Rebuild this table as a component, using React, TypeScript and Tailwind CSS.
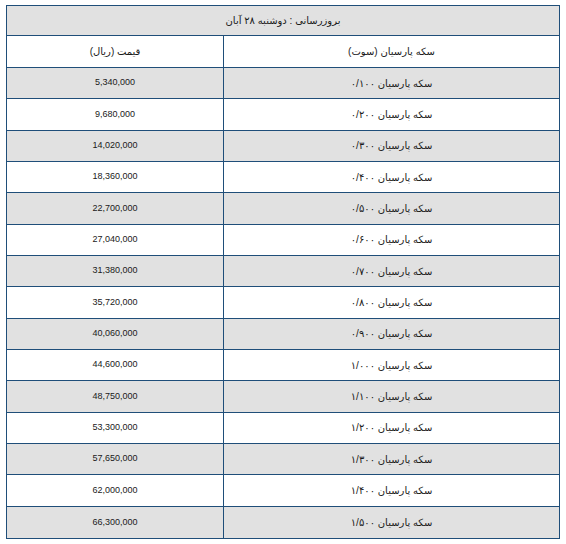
import React from "react"

const rows: [string, string][] = [
	["۰/۱۰۰", "5,340,000"],
	["۰/۲۰۰", "9,680,000"],
	["۰/۳۰۰", "14,020,000"],
	["۰/۴۰۰", "18,360,000"],
	["۰/۵۰۰", "22,700,000"],
	["۰/۶۰۰", "27,040,000"],
	["۰/۷۰۰", "31,380,000"],
	["۰/۸۰۰", "35,720,000"],
	["۰/۹۰۰", "40,060,000"],
	["۱/۰۰۰", "44,600,000"],
	["۱/۱۰۰", "48,750,000"],
	["۱/۲۰۰", "53,300,000"],
	["۱/۳۰۰", "57,650,000"],
	["۱/۴۰۰", "62,000,000"],
	["۱/۵۰۰", "66,300,000"],
]

const font = { fontFamily: '"Liberation Sans", "DejaVu Sans", sans-serif' }

const App: React.FC = () => {
	return (
		<div className="w-[566px] h-[544px] bg-white pt-[5px] pl-[6px]" style={font}>
			<div dir="rtl" className="w-[554px] border border-[#1f4e79] text-[#1a1a1a]">
				<div className="h-[30px] flex items-center justify-center bg-[#e1e1e1] border-b border-[#1f4e79] text-[10px]">
					بروزرسانی : دوشنبه ۲۸ آبان
				</div>
				<div className="h-[32px] grid grid-cols-[336px_1fr] border-b border-[#1f4e79] text-[10px]">
					<div className="flex items-center justify-center border-l border-[#1f4e79]">سکه پارسیان (سوت)</div>
					<div className="flex items-center justify-center">قیمت (ریال)</div>
				</div>
				{rows.map(([name, price], i) => (
					<div
						key={name}
						className={`h-[31.33px] grid grid-cols-[336px_1fr] ${i % 2 === 0 ? "bg-[#e1e1e1]" : "bg-white"} ${
							i < rows.length - 1 ? "border-b border-[#1f4e79]" : ""
						}`}
					>
						<div className="flex items-center justify-center border-l border-[#1f4e79] text-[10px]">
							سکه پارسیان {name}
						</div>
						<div dir="ltr" className="flex items-center justify-center text-[9px]">
							{price}
						</div>
					</div>
				))}
			</div>
		</div>
	)
}

export default App
